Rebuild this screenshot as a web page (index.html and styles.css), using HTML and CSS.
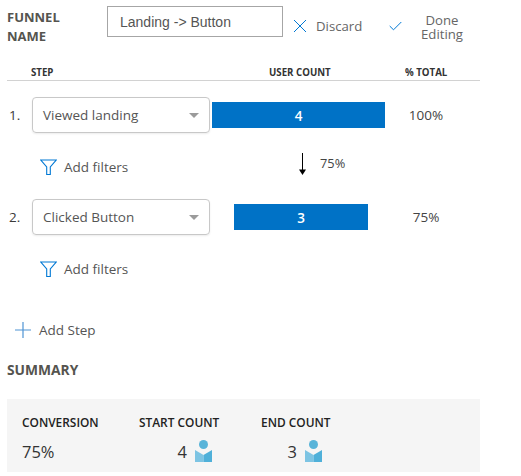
FILE: index.html
```html
<!DOCTYPE html>
<html lang="en">
<head>
<meta charset="utf-8">
<title>Funnel</title>
<link rel="stylesheet" href="styles.css">
</head>
<body>
<div class="page">
  <header class="head">
    <div class="funnel-label">FUNNEL<br>NAME</div>
    <input class="name-input" type="text" value="Landing -&gt; Button">
    <div class="action discard">
      <svg width="14" height="14" viewBox="0 0 14 14"><path d="M1 1 13 13M13 1 1 13" stroke="#0078d4" stroke-width="1" fill="none"/></svg>
      <span>Discard</span>
    </div>
    <div class="action done">
      <svg width="13" height="10" viewBox="0 0 13 10"><path d="M.7 5 4.500 8.800 12.300 1" stroke="#0078d4" stroke-width="1" fill="none"/></svg>
      <span class="done-text">Done<br>Editing</span>
    </div>
  </header>

  <div class="columns">
    <span class="col-step">STEP</span>
    <span class="col-count">USER COUNT</span>
    <span class="col-total">% TOTAL</span>
  </div>

  <div class="step step-one">
    <span class="num">1.</span>
    <div class="select"><span>Viewed landing</span><i class="caret"></i></div>
    <div class="bar-wrap"><div class="bar bar-a">4</div></div>
    <span class="pct">100%</span>
  </div>

  <div class="filters">
    <svg width="17" height="16" viewBox="0 0 17 16"><path d="M.8 1h15.400L10.300 8V15.500H6.700V8Z" stroke="#0078d4" stroke-width="1.100" fill="none"/></svg>
    <span class="filters-text">Add filters</span>
    <div class="drop">
      <svg width="7" height="22" viewBox="0 0 7 22"><path d="M3.500 0V18" stroke="#000" stroke-width="1"/><path d="M0 16.500H7L3.500 22Z" fill="#000"/></svg>
      <span class="drop-text">75%</span>
    </div>
  </div>

  <div class="step">
    <span class="num">2.</span>
    <div class="select"><span>Clicked Button</span><i class="caret"></i></div>
    <div class="bar-wrap"><div class="bar bar-b">3</div></div>
    <span class="pct">75%</span>
  </div>

  <div class="filters">
    <svg width="17" height="16" viewBox="0 0 17 16"><path d="M.8 1h15.400L10.300 8V15.500H6.700V8Z" stroke="#0078d4" stroke-width="1.100" fill="none"/></svg>
    <span class="filters-text">Add filters</span>
  </div>

  <div class="add-step">
    <svg width="16" height="16" viewBox="0 0 16 16"><path d="M8 0V16M0 8H16" stroke="#4f94d4" stroke-width="1.200" fill="none"/></svg>
    <span>Add Step</span>
  </div>

  <h2 class="summary-title">SUMMARY</h2>

  <section class="summary">
    <div class="stat s-conv">
      <div class="stat-label">CONVERSION</div>
      <div class="stat-value">75%</div>
    </div>
    <div class="stat s-start">
      <div class="stat-label">START COUNT</div>
      <div class="stat-value right">4
        <svg class="ico-user" width="17" height="22" viewBox="0 0 17 22"><circle cx="8.500" cy="4.500" r="4.500" fill="#59b4d9"/><path d="M0 10 8.500 15V22H0Z" fill="#7dc4e3"/><path d="M17 10 8.500 15V22H17Z" fill="#4fb0d9"/></svg>
      </div>
    </div>
    <div class="stat s-end">
      <div class="stat-label">END COUNT</div>
      <div class="stat-value right">3
        <svg class="ico-user" width="17" height="22" viewBox="0 0 17 22"><circle cx="8.500" cy="4.500" r="4.500" fill="#59b4d9"/><path d="M0 10 8.500 15V22H0Z" fill="#7dc4e3"/><path d="M17 10 8.500 15V22H17Z" fill="#4fb0d9"/></svg>
      </div>
    </div>
  </section>
</div>
</body>
</html>
```
FILE: styles.css
```css
* { box-sizing: border-box; }
html, body { margin: 0; padding: 0; background: #fff; }
body {
  width: 521px;
  height: 476px;
  overflow: hidden;
  font-family: "Open Sans", "Noto Sans", sans-serif;
  font-size: 13.500px;
  color: #3b3a39;
}
.page { padding: 6px 41px 0 7px; width: 521px; }

.head { display: flex; align-items: flex-start; height: 50px; }
.funnel-label {
  width: 100px;
  font-size: 13px;
  font-weight: 700;
  line-height: 19px;
  color: #55544f;
  padding-top: 2px;
}
.name-input {
  width: 176px;
  height: 31px;
  border: 1px solid #a6a6a6;
  border-radius: 0;
  padding: 0 12px;
  font: 14px "Liberation Sans", sans-serif;
  color: #555;
  background: #fff;
  outline: none;
}
.action { display: flex; align-items: center; height: 40px; color: #666; font-size: 13.200px; }
.discard { margin-left: 10px; gap: 9px; width: 96px; }
.done-text { width: 62px; margin-left: 9px; text-align: center; line-height: 14px; display: block; padding-top: 1px; }

.columns {
  display: flex;
  width: 473px;
  height: 25px;
  padding-top: 10px;
  border-bottom: 1px solid #d2d2d2;
  font-size: 9.700px;
  font-weight: 700;
  line-height: 14px;
  color: #333;
}
.col-step { margin-left: 24px; width: 238px; }
.col-count { width: 136px; }

.step { display: flex; align-items: center; height: 36px; }
.step-one { margin-top: 16px; }
.num { width: 25px; padding-left: 2px; }
.select {
  width: 178px;
  height: 36px;
  border: 1px solid #c8c8c8;
  border-radius: 4px;
  box-shadow: 0 1px 2px rgba(0,0,0,.08);
  display: flex;
  align-items: center;
  justify-content: space-between;
  padding: 0 10px 0 10px;
  color: #555;
}
.caret {
  width: 0;
  height: 0;
  border-left: 5px solid transparent;
  border-right: 5px solid transparent;
  border-top: 5px solid #9b9b9b;
}
.bar-wrap { width: 175px; margin-left: 2px; }
.bar {
  height: 26px;
  background: #0072c6;
  color: #fff;
  font-weight: 600;
  text-align: center;
  line-height: 29px;
}
.bar-a { width: 173px; }
.bar-b { width: 134px; margin-left: 22px; }
.pct { width: 78px; text-align: center; color: #444; }

.filters { display: flex; align-items: center; height: 66px; padding: 2px 0 0 33px; position: relative; }
.filters-text { margin-left: 7px; color: #555; }
.drop { display: flex; align-items: flex-start; position: absolute; left: 292px; top: 20px; gap: 14px; color: #444; font-size: 12.800px; line-height: 15px; }
.drop-text { padding-top: 3px; }

.add-step { display: flex; align-items: center; gap: 8px; margin-top: 18px; padding-left: 8px; height: 22px; color: #555; }

.summary-title {
  margin: 21px 0 0;
  font-size: 13.800px;
  font-weight: 700;
  line-height: 16px;
  color: #55544f;
}
.summary {
  margin-top: 21px;
  width: 473px;
  height: 73px;
  background: #f5f5f5;
  display: flex;
  padding: 14px 0 0 15px;
}
.stat-label { font-size: 11.900px; font-weight: 600; color: #222; line-height: 18px; white-space: nowrap; }
.stat-value { font-size: 16.500px; color: #333; line-height: 22px; margin-top: 10px; display: flex; align-items: center; gap: 8px; }
.stat-value.right { justify-content: flex-end; padding-right: 8px; }
.s-conv { width: 117px; }
.s-start { width: 81px; }
.s-end { margin-left: 41px; width: 69px; }
.ico-user { margin-top: -3px; }
```
